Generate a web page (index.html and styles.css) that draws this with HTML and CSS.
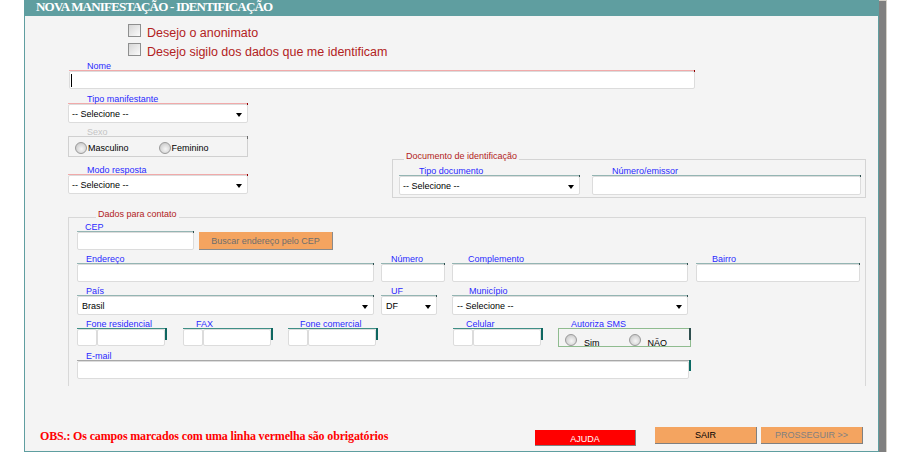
FILE: index.html
```html
<!DOCTYPE html>
<html lang="pt-BR">
<head>
<meta charset="utf-8">
<title>Nova manifestação - Identificação</title>
<link rel="stylesheet" href="styles.css">
</head>
<body>
<div class="panel">
  <div class="hdr">NOVA MANIFESTAÇÃO - IDENTIFICAÇÃO</div>

  <div class="checks">
    <div class="chk"><span class="cb"></span><span class="chk-txt">Desejo o anonimato</span></div>
    <div class="chk"><span class="cb"></span><span class="chk-txt">Desejo sigilo dos dados que me identificam</span></div>
  </div>

  <div class="fld req nome">
    <div class="lbl">Nome</div>
    <div class="inp"><span class="caret"></span></div>
  </div>

  <div class="mid">
    <div class="leftcol">
      <div class="fld req">
        <div class="lbl pl19">Tipo manifestante</div>
        <div class="sel">-- Selecione --</div>
      </div>
      <div class="fld sexo">
        <div class="lbl pl19">Sexo</div>
        <div class="radios">
          <span class="rd"></span><span class="rd-txt">Masculino</span>
          <span class="rd ml30"></span><span class="rd-txt">Feminino</span>
        </div>
      </div>
      <div class="fld req modo">
        <div class="lbl pl19">Modo resposta</div>
        <div class="sel">-- Selecione --</div>
      </div>
    </div>

    <div class="fs doc">
      <div class="legend">Documento de identificação</div>
      <div class="doc-row">
        <div class="fld tl w181">
          <div class="lbl pl20">Tipo documento</div>
          <div class="sel">-- Selecione --</div>
        </div>
        <div class="fld tl w269 ml12">
          <div class="lbl pl20">Número/emissor</div>
          <div class="inp h19"></div>
        </div>
      </div>
    </div>
  </div>

  <div class="fs contato">
    <div class="legend lg-contato">Dados para contato</div>

    <div class="row">
      <div class="fld tl w117">
        <div class="lbl pl8">CEP</div>
        <div class="inp"></div>
      </div>
      <div class="btn-cep">Buscar endereço pelo CEP</div>
    </div>

    <div class="row">
      <div class="fld tl w297">
        <div class="lbl pl9">Endereço</div>
        <div class="inp"></div>
      </div>
      <div class="fld tl w64 ml7">
        <div class="lbl pl10">Número</div>
        <div class="inp"></div>
      </div>
      <div class="fld tl w236 ml7">
        <div class="lbl pl16">Complemento</div>
        <div class="inp"></div>
      </div>
      <div class="fld tl w164 ml8">
        <div class="lbl pl16">Bairro</div>
        <div class="inp"></div>
      </div>
    </div>

    <div class="row">
      <div class="fld tl w297">
        <div class="lbl pl9">País</div>
        <div class="sel pl4">Brasil</div>
      </div>
      <div class="fld tl w56 ml7">
        <div class="lbl pl10">UF</div>
        <div class="sel pl4">DF</div>
      </div>
      <div class="fld tl w236 ml15">
        <div class="lbl pl17">Município</div>
        <div class="sel pl4">-- Selecione --</div>
      </div>
    </div>

    <div class="row">
      <div class="fld ph">
        <div class="lbl pl9">Fone residencial</div>
        <div class="ph-boxes"><div class="inp ddd"></div><div class="inp num"></div></div>
      </div>
      <div class="fld ph ml16">
        <div class="lbl pl13">FAX</div>
        <div class="ph-boxes"><div class="inp ddd"></div><div class="inp num"></div></div>
      </div>
      <div class="fld ph ml15">
        <div class="lbl pl12">Fone comercial</div>
        <div class="ph-boxes"><div class="inp ddd"></div><div class="inp num"></div></div>
      </div>
      <div class="fld ph ml75">
        <div class="lbl pl13">Celular</div>
        <div class="ph-boxes"><div class="inp ddd"></div><div class="inp num"></div></div>
      </div>
      <div class="fld sms ml15">
        <div class="lbl pl13">Autoriza SMS</div>
        <div class="sms-box">
          <span class="rd"></span><span class="sms-txt">Sim</span>
          <span class="rd ml29"></span><span class="sms-txt">NÃO</span>
        </div>
      </div>
    </div>

    <div class="row">
      <div class="fld mail">
        <div class="lbl pl9">E-mail</div>
        <div class="inp"></div>
      </div>
    </div>
  </div>

  <div class="foot">
    <div class="obs">OBS.: Os campos marcados com uma linha vermelha são obrigatórios</div>
    <div class="btn ajuda">AJUDA</div>
    <div class="btn sair">SAIR</div>
    <div class="btn pross">PROSSEGUIR &gt;&gt;</div>
  </div>
</div>
</body>
</html>
```

FILE: styles.css
```css
* { box-sizing: border-box; }

body {
  margin: 0;
  background: #fff;
  font-family: "Liberation Sans", Arial, sans-serif;
}

.panel {
  margin-left: 24px;
  width: 855px;
  height: 452px;
  border: 1px solid #5f9ea0;
  background: #f4f4f4;
  display: flex;
  flex-direction: column;
  box-shadow: 7px 1px 0 #808080, 4px 8px 0 #808080, 7px 8px 0 #808080, 8px 0 0 #d4d0c8;
}

.hdr {
  height: 15px;
  flex: none;
  background: #5f9ea0;
  color: #fff;
  font: bold 13px/12px "Liberation Serif", "Times New Roman", serif;
  letter-spacing: -0.8px;
  padding-left: 11px;
  white-space: nowrap;
}

/* checkboxes */
.checks { margin: 6px 0 0 103px; display: flex; flex-direction: column; gap: 1px; }
.chk { display: flex; align-items: flex-start; height: 18px; }
.cb {
  width: 13px; height: 13px; margin-top: 2px; margin-right: 6px;
  border: 1px solid #8e8f8f;
  background: linear-gradient(135deg, #d6d6d6, #fbfbfb);
}
.chk-txt { font-size: 12.5px; line-height: 18px; padding-top: 2px; color: #b22222; white-space: nowrap; }

/* generic field */
.fld { position: relative; flex: none; }
.fld::after {
  content: ""; position: absolute; right: 0; top: 9px;
  width: 1px; height: 2px; background: #2f4f4f;
}
.lbl {
  height: 10px;
  font-size: 9px;
  line-height: 11px;
  color: #2a2aff;
  border-bottom: 1px solid #94b5b3;
  white-space: nowrap;
}
.req .lbl { border-bottom-color: #f1aaaa; }
.req::after { background: #8b0000; }

.inp {
  height: 18px;
  background: #fff;
  border: 1px solid #dcdcdc;
  border-radius: 2px;
  display: flex;
  align-items: flex-start;
}
.inp.h19 { height: 19px; }
.caret { width: 1px; height: 13px; background: #000; margin: 2px 0 0 1px; }

.sel {
  position: relative;
  height: 19px;
  background: #fff;
  border: 1px solid #dcdcdc;
  border-radius: 2px;
  font-size: 9px;
  color: #000;
  display: flex;
  align-items: center;
  padding-left: 3px;
  white-space: nowrap;
}
.sel::after {
  content: ""; position: absolute; right: 5px; top: 8px;
  width: 0; height: 0;
  border-left: 3.5px solid transparent;
  border-right: 3.5px solid transparent;
  border-top: 4px solid #000;
}
.sel.pl4 { padding-left: 4px; }

.nome { margin: 2px 0 0 44px; width: 626px; }
.nome .lbl { padding-left: 18px; }

/* middle row */
.mid { display: flex; align-items: flex-start; margin: 5px 0 0 43px; }
.leftcol { width: 180px; display: flex; flex-direction: column; }

.sexo { margin-top: 4px; }
.sexo .lbl { color: #c4c4c4; border-bottom-color: #d0d0d0; }
.sexo::after { background: #6a6a6a; height: 3px; }
.radios {
  height: 20px;
  border: 1px solid #d0d0d0;
  border-top: none;
  display: flex;
  align-items: flex-start;
  padding: 5px 0 0 6px;
}
.rd {
  width: 12px; height: 12px; border-radius: 50%; flex: none;
  border: 1px solid #9a9a9a;
  background: radial-gradient(circle at 55% 60%, #f6f6f6 0, #dedede 45%, #bdbdbd 100%);
}
.rd-txt { font-size: 9px; line-height: 12px; color: #000; margin-left: 1px; }
.ml30 { margin-left: 30px; }
.modo { margin-top: 8px; }

/* fieldsets */
.fs { position: relative; border: 1px solid #d4d4d4; flex: none; }
.legend {
  position: absolute; left: 11px; top: -9px;
  background: #f4f4f4; padding: 0 2px;
  font-size: 9px; line-height: 10px;
  color: #b22222; white-space: nowrap;
}
.doc { margin: 65px 0 0 144px; width: 474px; padding: 6px 4px 2px 6px; }
.doc-row { display: flex; align-items: flex-start; }

.contato {
  margin: 19px 0 0 43px;
  width: 798px;
  border-color: #d8d8d8;
  border-bottom: none;
  padding: 4px 0 7px 8px;
}
.lg-contato { left: 27px; }

.row { display: flex; align-items: flex-start; }
.row + .row { margin-top: 4px; }

.btn-cep {
  margin: 10px 0 0 5px;
  width: 134px; height: 18px;
  background: #f4a460;
  border-right: 1px solid #8a8a8a;
  border-bottom: 1px solid #8a8a8a;
  color: #6e6e6e;
  font-size: 9px;
  display: flex; align-items: center; justify-content: center;
  white-space: nowrap;
}

/* phones */
.ph { width: 90px; }
.ph .lbl { border-bottom-color: #3f8f86; }
.ph::after { width: 2px; height: 12px; background: #0d6660; }
.ph-boxes { display: flex; }
.ph-boxes .inp { height: 17px; }
.ddd { width: 20px; }
.num { width: 68px; }

.sms { width: 133px; }
.sms .lbl { border-bottom: none; height: 9px; }
.sms::after { width: 2px; height: 12px; background: #2f4f4f; }
.sms-box {
  height: 19px;
  border: 1px solid #8fbc8f;
  display: flex; align-items: flex-start;
  padding: 5px 0 0 6px;
}
.sms-txt { font-size: 9px; line-height: 11px; padding-top: 4px; margin-left: 7px; color: #000; }
.ml29 { margin-left: 29px; }

.mail { width: 614px; }
.mail .lbl { border-bottom-color: #a8a8a8; }
.mail .inp { width: 612px; }
.mail::after { width: 2px; height: 11px; background: #0a6a64; }

/* widths / offsets */
.w56 { width: 56px; } .w64 { width: 64px; } .w117 { width: 117px; }
.w164 { width: 164px; } .w181 { width: 181px; } .w236 { width: 236px; }
.w269 { width: 269px; } .w297 { width: 297px; }
.ml7 { margin-left: 7px; } .ml8 { margin-left: 8px; } .ml12 { margin-left: 12px; }
.ml15 { margin-left: 15px; } .ml16 { margin-left: 16px; } .ml75 { margin-left: 75px; }
.pl8 { padding-left: 8px; } .pl9 { padding-left: 9px; } .pl10 { padding-left: 10px; }
.pl12 { padding-left: 12px; } .pl13 { padding-left: 13px; } .pl16 { padding-left: 16px; }
.pl17 { padding-left: 17px; } .pl19 { padding-left: 19px; } .pl20 { padding-left: 20px; }

/* footer */
.foot {
  margin-top: auto;
  display: flex;
  align-items: flex-end;
  padding: 0 15px 5px 15px;
}
.obs {
  font: bold 12px/15px "Liberation Serif", "Times New Roman", serif;
  letter-spacing: -0.15px;
  color: #ff0000;
  margin-bottom: 2px;
  white-space: nowrap;
}
.btn {
  font-size: 9px;
  display: flex; align-items: center; justify-content: center;
  border-right: 1px solid #808080;
  border-bottom: 1px solid #808080;
  white-space: nowrap;
}
.ajuda {
  margin-left: auto; margin-right: 19px;
  width: 101px; height: 16px;
  background: #ff0000; color: #fff;
  padding-top: 2px;
}
.sair, .pross {
  width: 102px; height: 17px; margin-bottom: 2px;
  background: #f4a460;
}
.sair { color: #000; margin-right: 4px; }
.pross { color: #808080; }
```
